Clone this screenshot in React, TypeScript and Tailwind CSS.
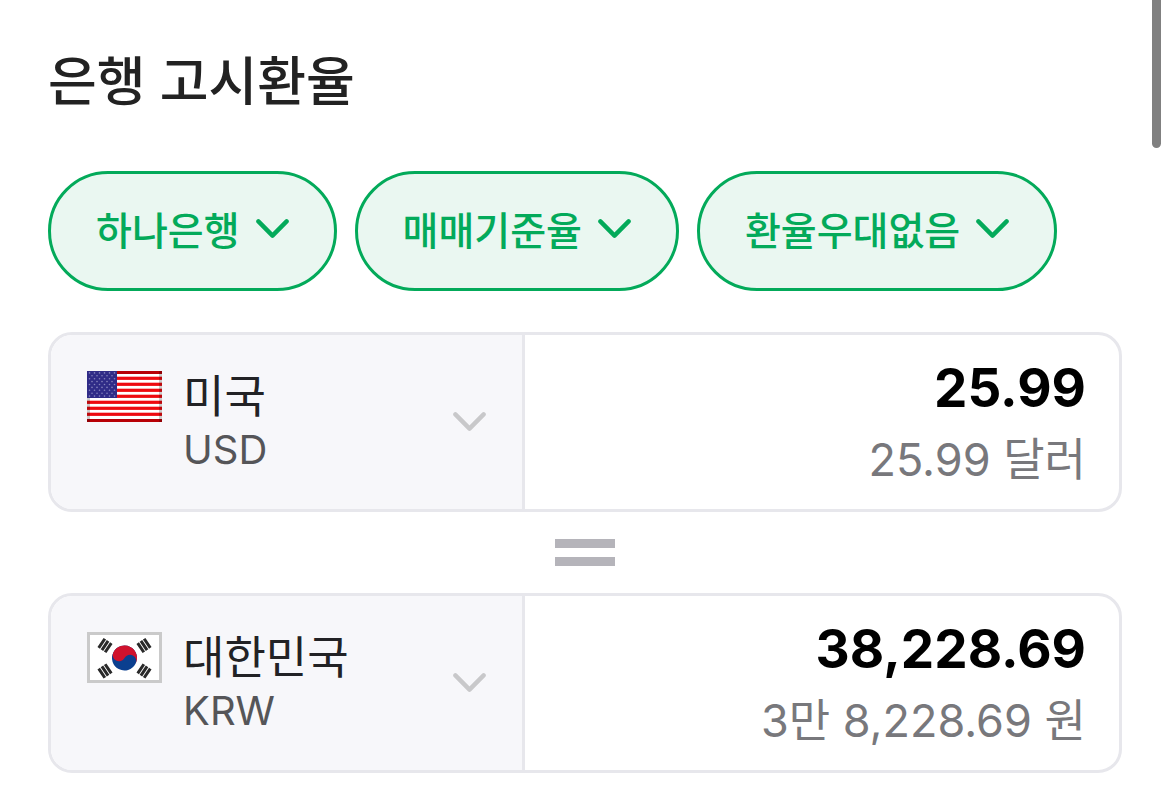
import { useState } from "react";
import type { ReactNode } from "react";

interface FilterSelectProps {
  label: string;
  options: string[];
}

interface CurrencyRowProps {
  flag: ReactNode;
  country: string;
  countries: string[];
  code: string;
  amount: string;
  reading: string;
}

const STRIPES = [1, 2, 3, 4, 5, 6, 7];
const STAR_ROWS = [0, 1, 2, 3, 4, 5, 6, 7, 8];
const STAR_COLS = [0, 1, 2, 3, 4, 5];

function ChevronIcon({ className }: { className: string }) {
  return (
    <svg
      aria-hidden="true"
      viewBox="0 0 33 20"
      className={`pointer-events-none h-5 w-[33px] flex-shrink-0 ${className}`}
      fill="none"
      stroke="currentColor"
      strokeWidth="4.4"
    >
      <path d="M2.4 2.4 16.5 16.6 30.6 2.4" strokeLinecap="round" strokeLinejoin="round" />
    </svg>
  );
}

function UsFlag() {
  return (
    <svg role="img" aria-label="미국 국기" viewBox="0 0 75 51" className="h-[51px] w-[75px] flex-shrink-0">
      <rect width="75" height="51" fill="#fff" />
      {STRIPES.map((i) => (
        <rect key={i} y={i * 6 - 0.3} width="75" height="3.2" fill="#ee0a10" />
      ))}
      <rect width="75" height="3" fill="#b80006" />
      <rect y="48" width="75" height="3" fill="#b80006" />
      <rect width="3" height="51" fill="#000" opacity="0.2" />
      <rect x="72" width="3" height="51" fill="#000" opacity="0.2" />
      <rect width="30" height="27" fill="#2f2b87" />
      {STAR_ROWS.map((row) =>
        STAR_COLS.slice(row % 2).map((col) => (
          <circle
            key={`${row}-${col}`}
            cx={2.5 + col * 5 - (row % 2) * 2.5}
            cy={1.9 + row * 2.9}
            r="0.8"
            fill="#8583bd"
          />
        )),
      )}
    </svg>
  );
}

interface TrigramProps {
  x: number;
  y: number;
  angle: number;
}

function Trigram({ x, y, angle }: TrigramProps) {
  return (
    <g transform={`translate(${x} ${y}) rotate(${angle})`} stroke="#2a2a2a" strokeWidth="3">
      <path d="M-5.5 -3.9H5.5M-5.5 0H5.5M-5.5 3.9H5.5" />
    </g>
  );
}

function KrFlag() {
  return (
    <svg role="img" aria-label="대한민국 국기" viewBox="0 0 75 51" className="h-[51px] w-[75px] flex-shrink-0">
      <rect x="1.5" y="1.5" width="72" height="48" fill="#fff" stroke="#cacaca" strokeWidth="3" />
      <g transform="translate(37.5 26) rotate(28)">
        <circle r="12.5" fill="#0b3f8f" />
        <path d="M-12.5 0A12.5 12.5 0 0 1 12.5 0A6.25 6.25 0 0 0 0 0A6.25 6.25 0 0 1 -12.5 0Z" fill="#d0122d" />
      </g>
      <Trigram x={18} y={13.5} angle={-56} />
      <Trigram x={57} y={13.5} angle={56} />
      <Trigram x={18} y={39} angle={56} />
      <Trigram x={57} y={39} angle={-56} />
    </svg>
  );
}

function FilterSelect({ label, options }: FilterSelectProps) {
  return (
    <div className="relative flex">
      <select
        aria-label={label}
        className="h-[120px] field-sizing-content cursor-pointer appearance-none rounded-full border-3 border-[#03aa5a] bg-[#eaf7f1] pr-[94px] pl-[45px] text-[39px] leading-[56px] font-medium text-[#03aa5a]"
      >
        {options.map((option) => (
          <option key={option}>{option}</option>
        ))}
      </select>
      <ChevronIcon className="absolute top-12 right-12 text-[#03aa5a]" />
    </div>
  );
}

function CurrencyRow({ flag, country, countries, code, amount, reading }: CurrencyRowProps) {
  const [value, setValue] = useState(amount);

  return (
    <div className="flex h-[180px] overflow-hidden rounded-3xl border-3 border-[#e7e7ec]">
      <div className="flex w-[44.4%] items-center border-r-3 border-[#e7e7ec] bg-[#f7f7fa] px-9">
        <div className="flex min-w-0 flex-1 items-start gap-[21px] self-start pt-9">
          {flag}
          <div className="flex min-w-0 flex-1 flex-col">
            <select
              aria-label="통화 선택"
              defaultValue={country}
              className="h-[52px] w-full cursor-pointer appearance-none bg-transparent text-[45px] leading-[52px] text-[#222225]"
            >
              {countries.map((name) => (
                <option key={name}>{name}</option>
              ))}
            </select>
            <span className="text-[40px] leading-[54px] text-[#555558]">{code}</span>
          </div>
        </div>
        <ChevronIcon className="text-[#c8c8ca]" />
      </div>
      <div className="flex min-w-0 flex-1 flex-col pt-[17px] pr-[33px] pl-8 text-right">
        <input
          aria-label={`${country} ${code} 금액`}
          inputMode="decimal"
          value={value}
          onChange={(e) => setValue(e.target.value)}
          className="h-[74px] w-full bg-transparent text-right text-[53px] font-bold text-black outline-none"
        />
        <span className="text-[45px] leading-[68px] text-[#78787c]">{reading}</span>
      </div>
    </div>
  );
}

export default function App() {
  const countries = ["미국", "대한민국", "일본", "중국"];

  return (
    <div className="relative bg-white font-['Inter','Noto_Sans_CJK_KR',sans-serif]">
      <main className="px-12 pt-[43px] pb-[33px]">
        <h2 className="text-[53px] leading-[78px] font-medium text-[#222]">은행 고시환율</h2>

        <div className="mt-[50px] flex flex-wrap gap-[18px]">
          <FilterSelect label="은행" options={["하나은행", "신한은행"]} />
          <FilterSelect label="환율 기준" options={["매매기준율", "현찰 살 때", "현찰 팔 때"]} />
          <FilterSelect label="환율 우대" options={["환율우대없음", "50%", "90%"]} />
        </div>

        <div className="mt-[41px] flex flex-col">
          <CurrencyRow
            flag={<UsFlag />}
            country="미국"
            countries={countries}
            code="USD"
            amount="25.99"
            reading="25.99 달러"
          />
          <div role="img" aria-label="같음" className="my-[27px] flex flex-col items-center gap-[9px]">
            <span className="h-[9px] w-[60px] bg-[#b5b4ba]" />
            <span className="h-[9px] w-[60px] bg-[#b5b4ba]" />
          </div>
          <CurrencyRow
            flag={<KrFlag />}
            country="대한민국"
            countries={countries}
            code="KRW"
            amount="38,228.69"
            reading="3만 8,228.69 원"
          />
        </div>
      </main>

      {/* scroll thumb */}
      <div className="absolute top-0 right-[9px] h-[148px] w-[9px] rounded-b-full bg-[#808080]" />
    </div>
  );
}
